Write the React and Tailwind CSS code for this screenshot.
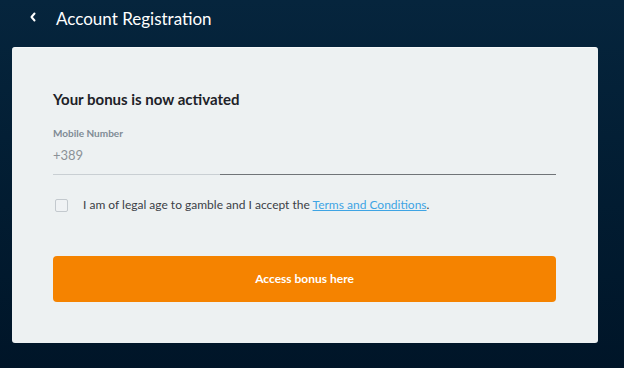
import React from "react";

export default function App() {
  return (
    <div
      className="w-[624px] h-[368px] overflow-hidden bg-gradient-to-b from-[#06253d] to-[#001528] flex flex-col"
      style={{ fontFamily: "Lato, 'Open Sans', sans-serif" }}
    >
      <div className="h-[37px] flex items-center pl-[29px]">
        <svg width="8" height="10" viewBox="0 0 8 10" className="mr-[19px] mt-[-3px]">
          <path d="M5.5 1.5 L2.5 5 L5.5 8.5" stroke="#ffffff" strokeWidth="2" fill="none" strokeLinecap="round" strokeLinejoin="round" />
        </svg>
        <span className="text-white text-[17px] leading-[20px]">Account Registration</span>
      </div>
      <div className="ml-[12px] mt-[10px] w-[586px] h-[296px] bg-[#edf1f2] rounded-[3px] border-t border-[#f7f9fa] pl-[41px] pr-[42px] pt-[41px] flex flex-col">
        <div className="text-[15px] leading-[20px] font-bold text-[#1d2228]">Your bonus is now activated</div>
        <div className="mt-[17px] text-[10px] leading-[14px] font-bold text-[#7f8b95]">Mobile Number</div>
        <div className="mt-[6px] text-[13px] leading-[18px] text-[#8b9197]">+389</div>
        <div className="mt-[10px] flex h-[1px]">
          <div className="w-[167px] bg-[#c9cfd3]" />
          <div className="flex-1 bg-[#707478]" />
        </div>
        <div className="mt-[22px] flex items-center">
          <div className="w-[13px] h-[13px] ml-[2px] border border-[#c3c9ce] rounded-[2px] bg-[#eff2f4]" />
          <span className="ml-[15px] text-[12px] leading-[16px] text-[#3b4046]">
            I am of legal age to gamble and I accept the{" "}
            <span className="text-[#3ea4e4] underline">Terms and Conditions</span>.
          </span>
        </div>
        <button className="mt-[43px] h-[46px] w-full rounded-[4px] bg-[#f58300] text-white text-[12px] font-bold flex items-center justify-center">
          Access bonus here
        </button>
      </div>
    </div>
  );
}
